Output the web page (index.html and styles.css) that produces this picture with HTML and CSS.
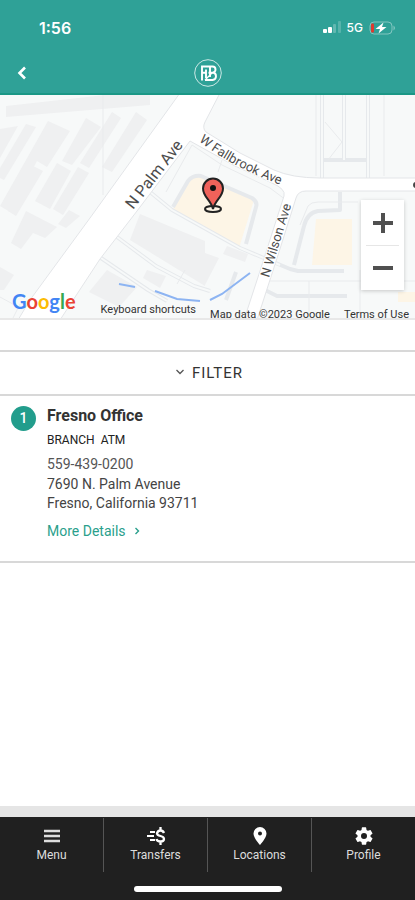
FILE: index.html
```html
<!DOCTYPE html>
<html lang="en">
<head>
    <meta charset="UTF-8">
    <meta name="viewport" content="width=device-width, initial-scale=1.0">
    <title>Locations</title>
    <link rel="stylesheet" href="styles.css">
</head>
<body>
    <header class="header">
        <div class="status">
            <span class="time">1:56</span>
            <div class="status-icons">
                <svg width="18" height="13" viewBox="0 0 18 13" fill="#fff">
                    <rect x="0" y="8" width="4" height="4" rx="1"/>
                    <rect x="5" y="6" width="4" height="6" rx="1"/>
                    <rect x="10" y="3" width="3" height="9" rx="1" opacity=".25"/>
                    <rect x="15" y="0" width="3" height="12" rx="1" opacity=".2"/>
                </svg>
                <span class="network">5G</span>
                <svg width="27" height="14" viewBox="0 0 27 14">
                    <rect x="1" y="1" width="22" height="12" rx="4" fill="none" stroke="#fff" stroke-opacity=".4"/>
                    <path d="M24.500 4.500q3 2.500 0 5z" fill="#fff" opacity=".4"/>
                    <rect x="2" y="2.500" width="3" height="9" rx="1" fill="#e0392f"/>
                    <path d="M14.500 1.500 6.500 8h4.500L9.500 12.500 17.500 6H13z" fill="#fff"/>
                </svg>
            </div>
        </div>
        <div class="titlebar">
            <button class="back" aria-label="Back">
                <svg width="10" height="14" viewBox="0 0 10 14"><path d="M8 1.500 2.500 7 8 12.500" fill="none" stroke="#fff" stroke-width="2.600"/></svg>
            </button>
            <svg class="logo" width="30" height="30" viewBox="0 0 30 30" fill="none" stroke="#fff">
                <circle cx="15" cy="15" r="13.300" stroke-opacity=".75"/>
                <path d="M9 22.500V8.500H19.500q3 0 3 3 0 2.500-2.500 3 3 .5 3 3.700T19.500 22h-7.500M15.500 14.700h4.500M9 14.700h3.500M13 20V11.500M17 9v10" stroke-width="1.900"/>
                <path d="M12 22 19.500 14.500" stroke-width="1.200"/>
            </svg>
            <span class="back"></span>
        </div>
    </header>

    <main>
        <section class="map" aria-label="Map">
            <svg class="map-canvas" viewBox="0 95 415 223" preserveAspectRatio="xMidYMid slice">
                <rect y="95" width="415" height="223" fill="#f7f9f9"/>

                <!-- Parking rows and buildings -->
                <g fill="#eff0f1">
                    <path d="M6 106 150 90V105L6 117z"/>
                    <path d="M0 129 18 126 0 158z"/>
                    <path d="M26 124 36 127 4 180 0 178V168z"/>
                    <path d="M48 121 70 131 47 167 37 161 10 212 0 206z"/>
                    <path d="M86 118 101 127 72 165 62 161z"/>
                    <path d="M112 112 121 118 89 168 80 163z"/>
                    <path d="M136 112 147 120 112 172 102 167z"/>
                    <path d="M57 163 71 171 50 209 35 201z"/>
                    <path d="M78 167 89 173 63 215 53 209z"/>
                    <path d="M33 166 43 171 16 216 8 211z"/>
                    <path d="M26 211 57 227 45 238 33 233 21 249 11 243z"/>
                    <path d="M69 210 80 216 66 228 58 224z"/>
                    <path d="M0 267 14 275 4 290H0z"/>
                    <path d="M140 214 205 241V286L130 240z"/>
                    <path d="M107 270 137 287 119 307 89 292z"/>
                    <path d="M147 270 166 276 160 288 143 278z"/>
                    <path d="M205 253 219 258 205 285z"/>
                    <path d="M227 246 248 254 245 262 223 254z"/>
                </g>

                <!-- Places of interest -->
                <g fill="#fdf5e6">
                    <path d="M192 177 202 175 254 200 239 248 173 209z"/>
                    <path d="M316 219H352V265H312z"/>
                    <path d="M398 292H415V302H398z"/>
                </g>

                <!-- Small lanes -->
                <g fill="none" stroke="#e6e9ec" stroke-width="4" stroke-linejoin="round">
                    <path d="M150 192 172 210 240 248 290 269 298 271H344"/>
                    <path d="M173 207 188 181Q193 175 201 176L252 198Q258 202 256 207L246 244"/>
                    <path d="M117 237 156 266 194 286 210 291"/>
                    <path d="M101 258 148 290 167 301"/>
                    <path d="M265 290 277 296H347"/>
                    <path d="M294 265 304 226Q307 213 318 211L340 210V192"/>
                    <path d="M322 95V185M344 95V160M324 160H368M368 95V183"/>
                    <path d="M236 272 226 300"/>
                </g>
                <g fill="none" stroke="#f7f9f9" stroke-width="2" stroke-linejoin="round">
                    <path d="M150 192 172 210 240 248 280 265"/>
                    <path d="M117 237 156 266 194 286 210 291"/>
                    <path d="M101 258 148 290 167 301"/>
                    <path d="M322 95V185M344 95V160M368 95V183"/>
                </g>
                <g fill="none" stroke="#e9ebed">
                    <path d="M103 95V195M316 95V176M384 95V176M325 122 342 142 328 160M260 281H415M309 281V318M360 270V318"/>
                    <path d="M222 160 218 172M166 192 192 145 222 165 270 188 286 200"/>
                    <path d="M300 225 308 206Q311 202 318 202H358"/>
                    <path d="M0 297 22 309M13 318 20 304M185 270 177 284"/>
                </g>

                <!-- Creek -->
                <path d="M119 284 135 287M155 291 177 299 200 301M210 300 222 294 250 273" fill="none" stroke="#8db4f2" stroke-width="2"/>

                <!-- Main streets -->
                <g fill="#fff" stroke="#e3e5e8">
                    <path d="M180 93 90 218 30 300 18 320H60L100 259 137 211 190 141 235 166 272 183Q286 189 284 196L260 271 244 320H257L279 252 296 198Q298 191 306 191H417V178H320Q292 178 274 170L240 153 206 132Q202 128 205 122L220 93z"/>
                </g>

                <g class="street">
                    <path id="fallbrook" d="M199 141Q235 170 295 190" fill="none" stroke="none"/>
                    <text class="major" transform="translate(133 210) rotate(-52)">N Palm Ave</text>
                    <text><textPath href="#fallbrook">W Fallbrook Ave</textPath></text>
                    <text transform="translate(269 278) rotate(-73)">N Wilson Ave</text>
                </g>
                <circle cx="416" cy="185" r="3" fill="#444"/>

                <!-- Location pin -->
                <ellipse cx="213" cy="209" rx="8" ry="3" fill="none" stroke="#222" stroke-width="2"/>
                <path d="M213 209C211 200 203 197 203 188.500a10 10 0 0 1 20 0C223 197 215 200 213 209z" fill="#f0625a" stroke="#222" stroke-width="2"/>
                <circle cx="213" cy="188" r="3" fill="#111"/>
            </svg>

            <div class="zoom">
                <button aria-label="Zoom in"><svg width="20" height="20" viewBox="0 0 20 20"><path d="M10 0V20M0 10H20" stroke="#505050" stroke-width="4"/></svg></button>
                <button aria-label="Zoom out"><svg width="20" height="20" viewBox="0 0 20 20"><path d="M0 10H20" stroke="#505050" stroke-width="4"/></svg></button>
            </div>
            <a class="google" href="#"><span class="blue">G</span><span class="red">o</span><span class="yellow">o</span><span class="blue">g</span><span class="green">l</span><span class="red">e</span></a>
            <div class="credits">
                <button class="shortcuts">Keyboard shortcuts</button>
                <span>Map data ©2023 Google</span>
                <a href="#">Terms of Use</a>
            </div>
        </section>

        <button class="filter">
            <svg width="10" height="8" viewBox="0 0 10 8"><path d="M1.500 1 5 4.500 8.500 1" fill="none" stroke="#555" stroke-width="1.300"/></svg>
            FILTER
        </button>

        <article class="location">
            <span class="number">1</span>
            <div class="info">
                <h2>Fresno Office</h2>
                <p class="types"><span>BRANCH</span><span>ATM</span></p>
                <a class="phone" href="tel:5594390200">559-439-0200</a>
                <address>7690 N. Palm Avenue<br>Fresno, California 93711</address>
                <a class="more" href="#">More Details
                    <svg width="6" height="8" viewBox="0 0 6 8"><path d="M1.500 1 4.500 4 1.500 7" fill="none" stroke="#2a9f8c" stroke-width="1.400"/></svg>
                </a>
            </div>
        </article>
    </main>

    <footer class="footer">
        <nav class="tabs">
            <a href="#">
                <svg width="16" height="18" viewBox="0 0 16 18"><path d="M0 4H16M0 9H16M0 14H16" stroke="#ddd" stroke-width="2.600"/></svg>
                Menu
            </a>
            <a href="#">
                <svg width="20" height="18" viewBox="0 0 20 18" fill="none" stroke="#fff">
                    <path d="M4 5H9M1 9H8M4 13H9" stroke-width="2"/>
                    <path d="M18 6Q17 3.500 14.500 3.500T11 6.200Q11 8.200 14.500 9T18 12Q18 14.500 14.500 14.500T10.500 12M14.500 0V3.500M14.500 14.500V18" stroke-width="2.300"/>
                </svg>
                Transfers
            </a>
            <a href="#">
                <svg width="18" height="18" viewBox="0 0 18 18"><path d="M9 0a6.500 6.500 0 0 0-6.500 6.500C2.500 11 9 18 9 18s6.500-7 6.500-11.500A6.500 6.500 0 0 0 9 0zm0 8.500a2 2 0 1 1 0-4 2 2 0 0 1 0 4z" fill="#fff"/></svg>
                Locations
            </a>
            <a href="#">
                <svg width="20" height="20" viewBox="1 1 22 22"><path d="M19.140 12.940c.04-.3.060-.61.060-.94s-.02-.64-.07-.94l2.030-1.580a.49.490 0 0 0 .12-.61l-1.920-3.320a.49.490 0 0 0-.59-.22l-2.390.96a7 7 0 0 0-1.620-.94l-.36-2.540a.48.480 0 0 0-.48-.41h-3.840a.48.480 0 0 0-.47.410l-.36 2.540a7.300 7.300 0 0 0-1.620.94l-2.390-.96a.48.480 0 0 0-.59.220L2.740 8.870a.48.480 0 0 0 .12.610l2.030 1.580a6 6 0 0 0 0 1.880l-2.030 1.580a.49.490 0 0 0-.12.610l1.920 3.320c.12.220.37.290.59.220l2.390-.96c.5.380 1.030.7 1.620.94l.36 2.540c.05.240.24.410.48.410h3.840c.24 0 .44-.17.470-.41l.36-2.540a7 7 0 0 0 1.620-.94l2.390.96c.22.080.47 0 .59-.22l1.920-3.320a.48.480 0 0 0-.12-.61zM12 15.300a3.300 3.300 0 1 1 0-6.600 3.300 3.300 0 0 1 0 6.600z" fill="#fff"/></svg>
                Profile
            </a>
        </nav>
        <div class="home-bar"></div>
    </footer>
</body>
</html>
```
FILE: styles.css
```css
* {
    box-sizing: border-box;
}

body {
    display: flex;
    flex-direction: column;
    min-height: 100vh;
    margin: 0;
    font-family: Roboto, Arial, sans-serif;
    color: #444;
    background-color: #fff;
}

button {
    border: none;
    padding: 0;
    background: none;
    font-family: inherit;
    color: inherit;
    cursor: pointer;
}

a {
    color: inherit;
    text-decoration: none;
}

svg {
    display: block;
}

main {
    flex: 1;
}

/* Header */
.header {
    background-color: #2fa197;
    border-bottom: 2px solid #1b9786;
    color: #fff;
}

.status {
    display: flex;
    justify-content: space-between;
    align-items: center;
    height: 52px;
    padding: 3px 19px 0 39px;
}

.time {
    font-family: Inter, sans-serif;
    font-size: 16px;
    font-weight: 600;
}

.status-icons {
    display: flex;
    align-items: center;
    gap: 6px;
}

.network {
    font-family: Inter, sans-serif;
    font-size: 12px;
    font-weight: 500;
}

.titlebar {
    display: flex;
    justify-content: space-between;
    align-items: center;
    height: 41px;
    padding: 0 17px;
}

.back {
    width: 10px;
}

/* Map */
.map {
    position: relative;
    height: 225px;
    overflow: hidden;
    border-bottom: 2px solid #e8e8e8;
}

.map-canvas {
    width: 100%;
    height: 223px;
}

.street {
    font-size: 13px;
    fill: #4c4c4c;
    stroke: #fff;
    stroke-width: 2px;
    paint-order: stroke;
}

.street .major {
    font-size: 16px;
}

.zoom {
    position: absolute;
    top: 105px;
    right: 11px;
    width: 43px;
    padding: 0 5px;
    background-color: #fff;
    box-shadow: 0 1px 4px rgba(0, 0, 0, 0.2);
}

.zoom button {
    display: flex;
    justify-content: center;
    align-items: center;
    width: 100%;
    height: 45px;
}

.zoom button + button {
    border-top: 1px solid #e6e6e6;
}

.google {
    position: absolute;
    left: 12px;
    bottom: 4px;
    font-family: Lato, sans-serif;
    font-size: 20px;
    font-weight: 700;
    line-height: 26px;
}

.blue {
    color: #4285f4;
}

.red {
    color: #ea4335;
}

.yellow {
    color: #fbbc05;
}

.green {
    color: #34a853;
}

.credits {
    position: absolute;
    right: 6px;
    bottom: -4px;
    display: flex;
    gap: 14px;
    font-size: 11px;
    line-height: 14px;
    color: #333;
}

.shortcuts {
    padding-bottom: 5px;
    font-size: 11px;
    line-height: 14px;
}

.credits span,
.credits a {
    padding-top: 5px;
}

/* Filter bar */
.filter {
    display: flex;
    justify-content: center;
    align-items: center;
    gap: 7px;
    width: 100%;
    height: 46px;
    margin-top: 30px;
    padding-left: 3px;
    border-top: 2px solid #d8d8d8;
    border-bottom: 2px solid #d8d8d8;
    font-size: 15px;
    letter-spacing: 1px;
    color: #333;
}

/* Location list */
.location {
    display: flex;
    gap: 11px;
    padding: 10px 11px 20px;
    border-bottom: 2px solid #d8d8d8;
}

.number {
    width: 25px;
    height: 25px;
    border-radius: 50%;
    background-color: #229d8c;
    font-size: 14px;
    font-weight: 500;
    line-height: 25px;
    text-align: center;
    color: #fff;
}

.info {
    font-size: 14px;
    line-height: 20px;
}

.info h2 {
    margin: 0;
    font-size: 16px;
    font-weight: 700;
    line-height: 20px;
    color: #333;
}

.types {
    display: flex;
    gap: 6px;
    margin: 4px 0;
    font-size: 12px;
    color: #222;
}

.phone {
    display: block;
    color: #555;
}

address {
    margin: 1px 0 8px;
    font-style: normal;
    line-height: 19px;
}

.more {
    display: flex;
    align-items: center;
    gap: 8px;
    color: #2a9f8c;
}

/* Bottom navigation */
.footer {
    border-top: 11px solid #e5e5e5;
    background-color: #202020;
    color: #ddd;
}

.tabs {
    display: flex;
    padding-top: 1px;
}

.tabs a {
    flex: 1;
    display: flex;
    flex-direction: column;
    align-items: center;
    height: 54px;
    padding-top: 8px;
    font-size: 12px;
    line-height: 18px;
}

.tabs a + a {
    border-left: 1px solid #555;
}

.tabs svg {
    height: 20px;
}

.home-bar {
    width: 148px;
    height: 6px;
    margin: 14px auto 8px;
    border-radius: 3px;
    background-color: #fff;
}
```
